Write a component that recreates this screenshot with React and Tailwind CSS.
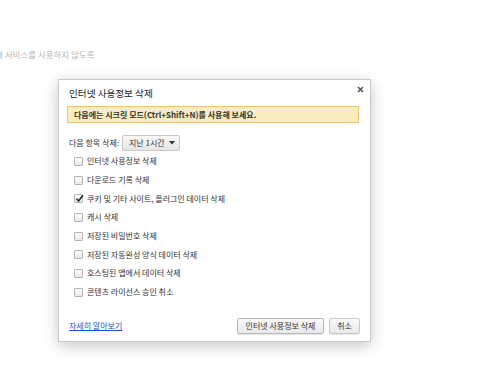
import React from "react";

const items = [
  ["인터넷 사용정보 삭제", false],
  ["다운로드 기록 삭제", false],
  ["쿠키 및 기타 사이트, 플러그인 데이터 삭제", true],
  ["캐시 삭제", false],
  ["저장된 비밀번호 삭제", false],
  ["저장된 자동완성 양식 데이터 삭제", false],
  ["호스팅된 앱에서 데이터 삭제", false],
  ["콘텐츠 라이선스 승인 취소", false],
];

function Box({ checked }) {
  return (
    <div className="w-[9px] h-[9px] border border-[#b4b4b4] rounded-[1px] bg-gradient-to-b from-[#fdfdfd] to-[#e8e8e8] flex items-center justify-center shrink-0 relative">
      {checked && (
        <svg width="9" height="9" viewBox="0 0 9 9" className="absolute left-[0px] top-[-1px]">
          <path d="M1.5 4.8 L3.6 7 L7.8 1.2" stroke="#222" strokeWidth="1.5" fill="none" />
        </svg>
      )}
    </div>
  );
}

export default function App() {
  return (
    <div
      className="w-[480px] h-[380px] bg-white overflow-hidden pt-[48px]"
      style={{ fontFamily: '"Noto Sans CJK KR", "Noto Sans", sans-serif' }}
    >
      <div className="h-[12px] leading-[12px] text-[8.5px] text-[#b8b8b8] ml-[-5px] whitespace-nowrap">
        해 서비스를 사용하지 않도록
      </div>
      <div className="ml-[58px] mt-[19px] w-[313px] h-[263px] bg-white border border-[#c9c9c9] shadow-[0_4px_14px_rgba(0,0,0,0.22)] relative flex flex-col">
        <svg width="7" height="7" viewBox="0 0 7 7" className="absolute right-[6px] top-[6px]">
          <path d="M1 1 L6 6 M6 1 L1 6" stroke="#555" strokeWidth="1.6" />
        </svg>
        <div className="mt-[7px] pl-[10px] h-[12px] leading-[12px] text-[9.6px] text-[#222]">
          인터넷 사용정보 삭제
        </div>
        <div className="mt-[7px] ml-[8px] mr-[11px] h-[17px] bg-[#f9edbe] border border-[#f0c36d] pl-[6px] flex items-center text-[8px] font-bold text-[#333]">
          다음에는 시크릿 모드(Ctrl+Shift+N)를 사용해 보세요.
        </div>
        <div className="mt-[12px] pl-[10px] h-[16px] flex items-center">
          <span className="text-[8px] text-[#333]">다음 항목 삭제:</span>
          <div className="ml-[3px] w-[58px] h-[16px] border border-[#c8c8c8] rounded-[2px] bg-gradient-to-b from-[#f8f8f8] to-[#e6e6e6] flex items-center pl-[6px] pr-[4px]">
            <span className="text-[8px] text-[#333] flex-1">지난 1시간</span>
            <svg width="6" height="4" viewBox="0 0 6 4">
              <path d="M0 0 L6 0 L3 3.5 Z" fill="#333" />
            </svg>
          </div>
        </div>
        <div className="mt-[1px] flex flex-col">
          {items.map(([label, checked]) => (
            <div key={label} className="h-[18.7px] flex items-center pl-[15px]">
              <Box checked={checked} />
              <span className="ml-[4px] text-[8px] text-[#333] whitespace-nowrap">{label}</span>
            </div>
          ))}
        </div>
        <div className="mt-auto mb-[7px] flex items-center pl-[10px] pr-[10px]">
          <a className="text-[8px] text-[#15c] underline flex-1">자세히 알아보기</a>
          <div className="h-[16px] w-[87px] border border-[#b8b8b8] rounded-[2px] bg-gradient-to-b from-[#fafafa] to-[#e8e8e8] flex items-center justify-center text-[8px] text-[#333] shadow-[0_1px_1px_rgba(0,0,0,0.1)]">
            인터넷 사용정보 삭제
          </div>
          <div className="ml-[5px] h-[16px] w-[31px] border border-[#c8c8c8] rounded-[2px] bg-gradient-to-b from-[#fafafa] to-[#e8e8e8] flex items-center justify-center text-[8px] text-[#333] shadow-[0_1px_1px_rgba(0,0,0,0.1)]">
            취소
          </div>
        </div>
      </div>
    </div>
  );
}
